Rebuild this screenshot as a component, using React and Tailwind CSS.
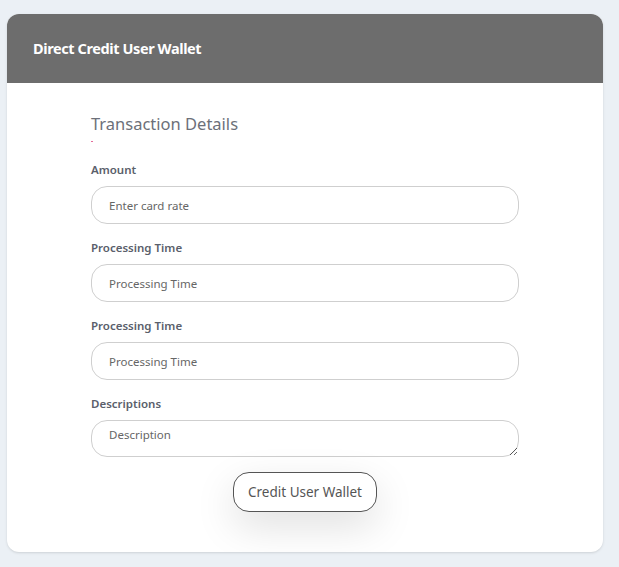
import React from "react";

function Field({ label, placeholder, textarea }) {
  return (
    <div className="flex flex-col">
      <label className="text-[11.5px] leading-4 font-semibold text-[#5a606b] mb-2">
        {label}
      </label>
      {textarea ? (
        <textarea
          placeholder={placeholder}
          className="h-[37px] w-full rounded-[16px] border border-[#cfcfcf] px-[17px] pt-[6px] text-[11.5px] leading-4 text-[#555] placeholder:text-[#666] outline-none resize-y"
        />
      ) : (
        <input
          placeholder={placeholder}
          className="h-[38px] w-full rounded-[16px] border border-[#cfcfcf] px-[17px] text-[11.5px] text-[#555] placeholder:text-[#666] outline-none"
        />
      )}
    </div>
  );
}

export default function App() {
  return (
    <div
      className="min-h-[567px] bg-[#ebf0f5] pl-[7px] pt-[14px] pb-[16px]"
      style={{ fontFamily: '"Noto Sans", "Open Sans", sans-serif' }}
    >
      <div className="w-[596px] rounded-[12px] bg-white overflow-hidden shadow-sm">
        {/* Header */}
        <div className="h-[69px] bg-[#6d6d6d] flex items-center px-[26px]">
          <h1 className="text-[14.5px] font-bold text-white tracking-[-0.4px]">
            Direct Credit User Wallet
          </h1>
        </div>

        {/* Body */}
        <div className="w-[428px] ml-[84px] pt-[29px] pb-[40px]">
          <h2 className="text-[16.5px] leading-6 text-[#6c7079]">
            Transaction Details
          </h2>
          <div className="mt-[5px] h-[1px] w-[2px] bg-[#e56b9a]" />

          <div className="mt-[20px] flex flex-col gap-4">
            <Field label="Amount" placeholder="Enter card rate" />
            <Field label="Processing Time" placeholder="Processing Time" />
            <Field label="Processing Time" placeholder="Processing Time" />
            <Field label="Descriptions" placeholder="Description" textarea />
          </div>

          <div className="mt-[15px] flex justify-center">
            <button className="h-[40px] px-[14px] rounded-[16px] border border-[#555] bg-white text-[13.5px] text-[#555] shadow-[0_14px_40px_rgba(0,0,0,0.13)]">
              Credit User Wallet
            </button>
          </div>
        </div>
      </div>
    </div>
  );
}
